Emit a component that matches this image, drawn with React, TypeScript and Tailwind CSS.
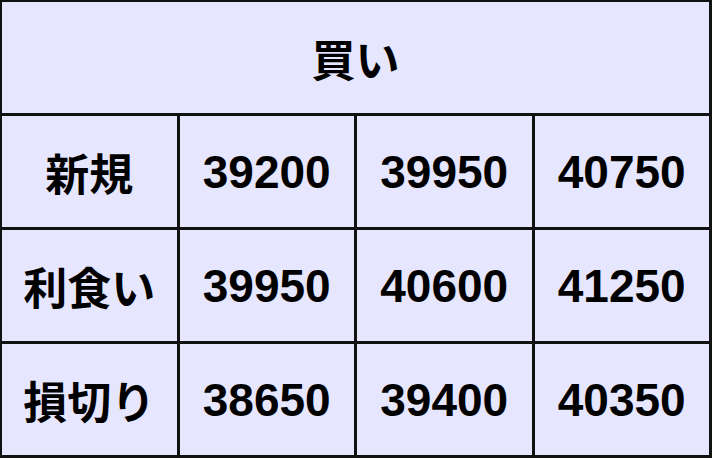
const rows = [
  { label: "新規", values: ["39200", "39950", "40750"] },
  { label: "利食い", values: ["39950", "40600", "41250"] },
  { label: "損切り", values: ["38650", "39400", "40350"] },
];

const jp = "font-['Noto_Sans_CJK_JP',sans-serif] font-bold text-[44px]";
const num = "font-['Liberation_Sans',Arial,sans-serif] font-bold text-[46px]";

export default function App() {
  return (
    <div className="h-[458px] w-[712px] bg-white">
      <div className="grid h-full w-full grid-cols-4 grid-rows-4 gap-[3px] bg-[#111] pb-[3px] pl-[2px] pr-[3px] pt-[2px] text-black">
        <div className={`col-span-4 flex items-center justify-center bg-[#e6e6ff] leading-none ${jp}`}>
          買い
        </div>
        {rows.map((r) => (
          <>
            <div
              key={r.label}
              className={`flex items-center justify-center bg-[#e6e6ff] leading-none ${jp}`}
            >
              {r.label}
            </div>
            {r.values.map((v, i) => (
              <div
                key={r.label + i}
                className={`flex items-center justify-center bg-[#e6e6ff] leading-none ${num}`}
              >
                {v}
              </div>
            ))}
          </>
        ))}
      </div>
    </div>
  );
}
